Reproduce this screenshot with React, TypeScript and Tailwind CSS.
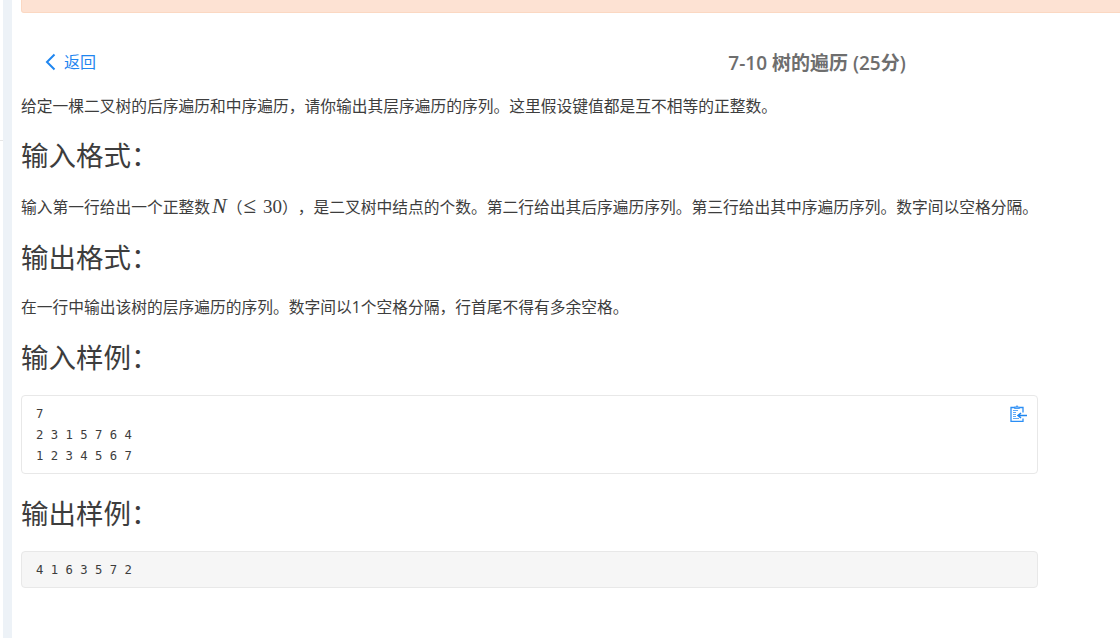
const cjk = "font-['Open_Sans','Noto_Sans_CJK_SC',sans-serif]"

function SectionTitle({ children }: { children: string }) {
  return <h3 className="text-[27.5px] leading-[36px] font-normal text-[#3d3d3d]">{children}</h3>
}

function PasteIcon() {
  return (
    <svg width="17" height="17" viewBox="0 0 17 17" fill="none" className="absolute right-[10px] top-[9px]">
      <path d="M5.5 2.5H1v14h12v-3M9.5 2.5H13v5" stroke="#2b8ef5" strokeWidth="1.3" />
      <path d="M4.5 3.5V2h1.7L7 .6 7.8 2h1.7v1.5z" fill="#7cb7f7" stroke="#2b8ef5" strokeWidth="0.8" />
      <path d="M3 5.5h5M3 7.5h3M3 9.5h3M3 11.5h3M3 13.5h6" stroke="#2b8ef5" strokeWidth="1" opacity="0.75" />
      <path d="M17 10.5H8M11 8l-3 2.5 3 2.5" stroke="#1f86f0" strokeWidth="1.6" />
    </svg>
  )
}

export default function App() {
  return (
    <div className={`flex h-[638px] w-[1120px] overflow-hidden bg-white ${cjk}`}>
      <div className="flex w-[3px] flex-col pt-[140px]">
        <div className="h-px bg-[#e6e6e6]" />
      </div>
      <div className="h-full w-[9px] bg-[#edf2f7]" />

      <div className="min-w-0 flex-1 pl-[9px]">
        <div className="h-[13px] w-[1110px] rounded-b-[3px] border border-t-0 border-[#fbd8c2] bg-[#fde2d3]" />

        <div className="relative mt-[32px] flex h-[35px] w-[1093px] items-center justify-center">
          <a className="absolute left-[24px] top-[7px] flex items-center gap-[8px] text-[16px] leading-[20px] text-[#1f86f0]">
            <svg width="11" height="18" viewBox="0 0 11 18" fill="none">
              <path d="M9.5 1.5 2 9l7.5 7.5" stroke="#1f86f0" strokeWidth="2" />
            </svg>
            返回
          </a>
          <h2 className="ml-[499px] text-[19px] leading-[24px] font-semibold text-[#6e6e6e]">7-10 树的遍历 (25分)</h2>
        </div>

        <p className="mt-[14px] text-[15.75px] leading-[24px] text-[#3d3d3d]">
          给定一棵二叉树的后序遍历和中序遍历，请你输出其层序遍历的序列。这里假设键值都是互不相等的正整数。
        </p>

        <div className="mt-[20px]">
          <SectionTitle>输入格式：</SectionTitle>
        </div>
        <p className="mt-[20px] whitespace-nowrap text-[15.75px] leading-[24px] text-[#3d3d3d] [text-spacing-trim:space-all]">
          输入第一行给出一个正整数
          <i className="ml-[2px] font-['Liberation_Serif',serif] text-[22px] leading-none">N</i>
          （
          <span className="ml-[1px] font-['Liberation_Serif',serif] text-[23px] leading-none">≤</span>
          <span className="ml-[7px] font-['Liberation_Serif',serif] text-[19px] leading-none">30</span>
          ），是二叉树中结点的个数。第二行给出其后序遍历序列。第三行给出其中序遍历序列。数字间以空格分隔。
        </p>

        <div className="mt-[21px]">
          <SectionTitle>输出格式：</SectionTitle>
        </div>
        <p className="mt-[19px] text-[15.75px] leading-[24px] text-[#3d3d3d]">
          在一行中输出该树的层序遍历的序列。数字间以1个空格分隔，行首尾不得有多余空格。
        </p>

        <div className="mt-[21px]">
          <SectionTitle>输入样例：</SectionTitle>
        </div>
        <div className="relative mt-[19px] h-[79px] w-[1017px] rounded-[4px] border border-[#e8e8e8] bg-white px-[14px] pt-[8px]">
          <PasteIcon />
          <pre className="font-['DejaVu_Sans_Mono',monospace] text-[12.25px] leading-[21px] text-[#3d3d3d]">{'7\n2 3 1 5 7 6 4\n1 2 3 4 5 6 7'}</pre>
        </div>

        <div className="mt-[22px]">
          <SectionTitle>输出样例：</SectionTitle>
        </div>
        <div className="mt-[19px] h-[37px] w-[1017px] rounded-[4px] border border-[#e8e8e8] bg-[#f6f6f6] px-[14px] pt-[8px]">
          <pre className="font-['DejaVu_Sans_Mono',monospace] text-[12.25px] leading-[21px] text-[#3d3d3d]">4 1 6 3 5 7 2</pre>
        </div>
      </div>
    </div>
  )
}
